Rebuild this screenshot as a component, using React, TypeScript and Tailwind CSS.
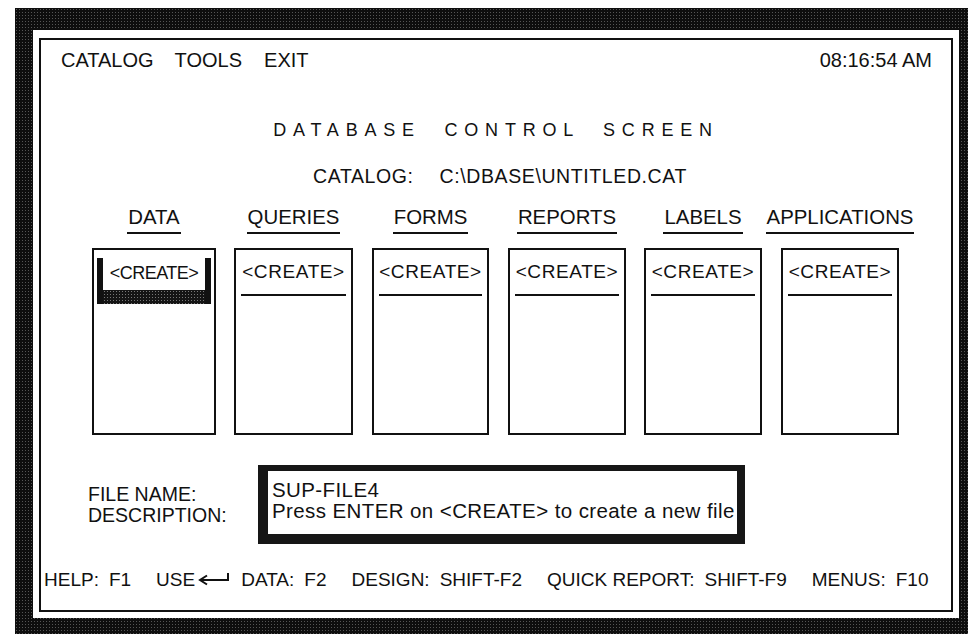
import React from "react";

const FONT = { fontFamily: '"Liberation Sans", Arial, sans-serif' };

function EnterArrow() {
  return (
    <svg width="32" height="14" viewBox="0 0 32 14" className="inline-block -translate-y-[2px]">
      <path d="M30 1 V8 H2" fill="none" stroke="#111" strokeWidth="2" />
      <path d="M9 3.5 L2 8 L9 12.5" fill="none" stroke="#111" strokeWidth="2" />
    </svg>
  );
}

type Col = { title: string; width: string; ml: string; selected?: boolean };

const cols: Col[] = [
  { title: "DATA", width: "w-[124px]", ml: "ml-[51px]", selected: true },
  { title: "QUERIES", width: "w-[119px]", ml: "ml-[18px]" },
  { title: "FORMS", width: "w-[117px]", ml: "ml-[19px]" },
  { title: "REPORTS", width: "w-[118px]", ml: "ml-[19px]" },
  { title: "LABELS", width: "w-[118px]", ml: "ml-[18px]" },
  { title: "APPLICATIONS", width: "w-[118px]", ml: "ml-[19px]" },
];

function Column({ c }: { c: Col }) {
  return (
    <div className={`flex flex-col items-center shrink-0 ${c.width} ${c.ml}`}>
      <div className="flex flex-col items-center">
        <div className="text-[20.4px] leading-[23px] whitespace-nowrap text-[#111]">{c.title}</div>
        <div className="mt-[3px] h-[2px] w-[calc(100%+2px)] bg-[#111]" />
      </div>
      <div className="mt-[14px] h-[187px] w-full border-2 border-[#111] bg-white">
        {c.selected ? (
          <div className="mx-[3px] mt-[8px] flex h-[46px] flex-col border-x-[6px] border-[#111]">
            <div className="h-[32px] pt-[3px] text-center text-[18px] leading-[24px] tracking-[-0.5px] text-[#111]">
              &lt;CREATE&gt;
            </div>
            <div className="flex-1 bg-[#141414] bg-[radial-gradient(circle,_#777_0.7px,_transparent_1px)] bg-[length:3px_3px]" />
          </div>
        ) : (
          <div className="px-[5px] pt-[11px]">
            <div className="text-center text-[19px] leading-[22px] tracking-[0.6px] whitespace-nowrap text-[#111]">
              &lt;CREATE&gt;
            </div>
            <div className="mt-[11px] h-[2px] bg-[#111]" />
          </div>
        )}
      </div>
    </div>
  );
}

export default function App() {
  return (
    <div className="relative h-[637px] w-[968px] overflow-hidden bg-white pl-[15px] pt-[8px]" style={FONT}>
      <div className="h-[626px] w-[953px] bg-[#0e0e0e] bg-[radial-gradient(circle,_#555_0.7px,_transparent_1px)] bg-[length:3px_3px] pb-[16px] pl-[18px] pr-[9px] pt-[22px]">
        <div className="h-full w-full bg-white pb-[6px] pl-[6px] pr-[6px] pt-[8px]">
          <div className="flex h-full w-full flex-col border-2 border-[#111] text-[#111]">
            {/* Menu row */}
            <div className="flex items-center pl-[20px] pr-[19px] pt-[8px] text-[20px] leading-[24px]">
              <span>CATALOG</span>
              <span className="ml-[21px]">TOOLS</span>
              <span className="ml-[22px]">EXIT</span>
              <span className="ml-auto">08:16:54 AM</span>
            </div>

            {/* Title */}
            <div className="mt-[47px] text-center text-[18px] leading-[22px] tracking-[6.8px] whitespace-pre">
              {"DATABASE  CONTROL  SCREEN"}
            </div>

            {/* Catalog line */}
            <div className="mt-[24px] flex justify-center pl-[8px] text-[19.5px] leading-[22px] tracking-[0.6px] whitespace-nowrap">
              <span>CATALOG:</span>
              <span className="ml-[26px]">C:\DBASE\UNTITLED.CAT</span>
            </div>

            {/* Columns */}
            <div className="mt-[19px] flex">
              {cols.map((c) => (
                <Column key={c.title} c={c} />
              ))}
            </div>

            {/* File name area */}
            <div className="mt-[30px] flex items-center">
              <div className="ml-[47px] w-[170px] text-[19.5px] leading-[21px]">
                <div>FILE NAME:</div>
                <div>DESCRIPTION:</div>
              </div>
              <div className="h-[79px] w-[487px] border-b-[10px] border-l-[10px] border-r-[8px] border-t-[6px] border-[#161616] pl-[4px] pt-[8px] text-[20.5px] leading-[21px] tracking-[0.4px]">
                <div>SUP-FILE4</div>
                <div className="whitespace-nowrap">Press ENTER on &lt;CREATE&gt; to create a new file</div>
              </div>
            </div>

            {/* Footer */}
            <div className="mt-[25px] flex items-center whitespace-nowrap pl-[3px] text-[19px] leading-[22px]">
              <span>HELP:</span>
              <span className="ml-[10px]">F1</span>
              <span className="ml-[25px]">USE</span>
              <span className="ml-[3px]">
                <EnterArrow />
              </span>
              <span className="ml-[11px]">DATA:</span>
              <span className="ml-[10px]">F2</span>
              <span className="ml-[25px]">DESIGN:</span>
              <span className="ml-[10px]">SHIFT-F2</span>
              <span className="ml-[25px]">QUICK REPORT:</span>
              <span className="ml-[10px]">SHIFT-F9</span>
              <span className="ml-[25px]">MENUS:</span>
              <span className="ml-[10px]">F10</span>
            </div>
          </div>
        </div>
      </div>
    </div>
  );
}
